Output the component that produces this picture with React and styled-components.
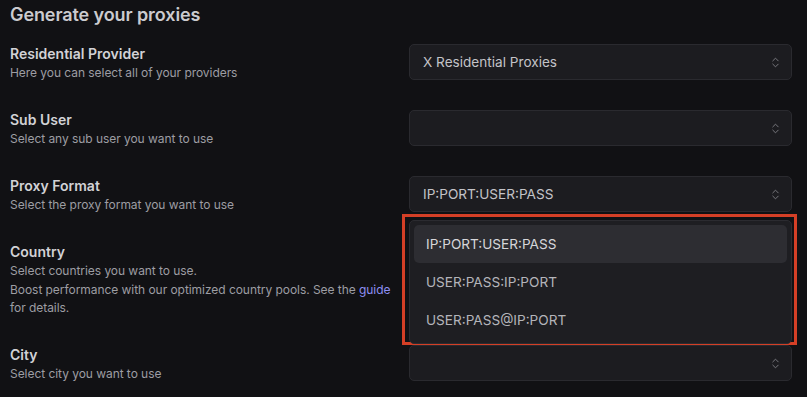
import React from 'react'
import styled, { createGlobalStyle } from 'styled-components';
import { ChevronsUpDown } from 'lucide-react';

const GlobalStyle = createGlobalStyle`
html, body {
    margin: 0;
    padding: 0;
    background: #111114;
}
body {
    font-family: Inter, "Noto Sans", sans-serif;
    -webkit-font-smoothing: antialiased;
}
`;

const Page = styled.div`
width: 807px;
height: 397px;
box-sizing: border-box;
padding: 3px 15px 0 10px;
overflow: hidden;
background: #111114;
`;

const Title = styled.h2`
margin: 0 0 17px;
font-size: 18px;
line-height: 24px;
font-weight: 600;
color: #cbcbcf;
letter-spacing: -0.1px;
`;

const Form = styled.div`
display: flex;
flex-direction: column;
gap: 27.5px;
`;

const Row = styled.div`
display: grid;
grid-template-columns: 1fr 383px;
column-gap: 9px;
align-items: start;
`;

const Info = styled.div`
display: flex;
flex-direction: column;
`;

const Label = styled.div`
font-size: 14px;
line-height: 20px;
font-weight: 600;
color: #d2d2d6;
`;

const Desc = styled.p`
margin: 0;
font-size: 12px;
line-height: 18.5px;
letter-spacing: -0.05px;
color: #9d9da3;
a{
    color: #8e8ff2;
    text-decoration: none;
}
`;

const Field = styled.div`
position: relative;
`;

const Select = styled.div`
display: flex;
align-items: center;
justify-content: space-between;
height: 36px;
box-sizing: border-box;
padding: 0 9px 0 13px;
background: #1c1c20;
border: 1px solid #2a2a2f;
border-radius: 5px;
font-size: 13.6px;
color: #c3c3c8;
svg{
    color: #85858b;
    flex-shrink: 0;
}
`;

const Annotation = styled.div`
position: absolute;
top: calc(100% + 2px);
left: -7px;
right: -5px;
padding: 3px 2px 0 4px;
border: 3px solid #d43f26;
z-index: 2;
`;

const Menu = styled.div`
background: #1e1e22;
border: 1px solid #2b2b30;
border-radius: 5px;
padding: 4px;
margin-bottom: -2px;
`;

const Option = styled.div`
display: flex;
align-items: center;
height: 38px;
padding: 0 12px;
border-radius: 5px;
font-size: 13.6px;
color: ${p => p.$active ? '#d6d6da' : '#b4b4ba'};
background: ${p => p.$active ? '#2d2d32' : 'transparent'};
`;

const formats = ['IP:PORT:USER:PASS', 'USER:PASS:IP:PORT', 'USER:PASS@IP:PORT'];

function App() {
    return (
        <Page>
            <GlobalStyle />
            <Title>Generate your proxies</Title>
            <Form>
                <Row>
                    <Info>
                        <Label>Residential Provider</Label>
                        <Desc>Here you can select all of your providers</Desc>
                    </Info>
                    <Select>X Residential Proxies<ChevronsUpDown size={13} strokeWidth={1.6} /></Select>
                </Row>

                <Row>
                    <Info>
                        <Label>Sub User</Label>
                        <Desc>Select any sub user you want to use</Desc>
                    </Info>
                    <Select><span /><ChevronsUpDown size={13} strokeWidth={1.6} /></Select>
                </Row>

                <Row>
                    <Info>
                        <Label>Proxy Format</Label>
                        <Desc>Select the proxy format you want to use</Desc>
                    </Info>
                    <Field>
                        <Select>IP:PORT:USER:PASS<ChevronsUpDown size={13} strokeWidth={1.6} /></Select>
                        <Annotation>
                            <Menu>
                                {formats.map((f, i) => (
                                    <Option key={f} $active={i === 0}>{f}</Option>
                                ))}
                            </Menu>
                        </Annotation>
                    </Field>
                </Row>

                <Row>
                    <Info>
                        <Label>Country</Label>
                        <Desc>Select countries you want to use.</Desc>
                        <Desc>Boost performance with our optimized country pools. See the <a href="#guide">guide</a> for details.</Desc>
                    </Info>
                    <Select><span /><ChevronsUpDown size={13} strokeWidth={1.6} /></Select>
                </Row>

                <Row>
                    <Info>
                        <Label>City</Label>
                        <Desc>Select city you want to use</Desc>
                    </Info>
                    <Select><span /><ChevronsUpDown size={13} strokeWidth={1.6} /></Select>
                </Row>
            </Form>
        </Page>
    )
}

export default App;
